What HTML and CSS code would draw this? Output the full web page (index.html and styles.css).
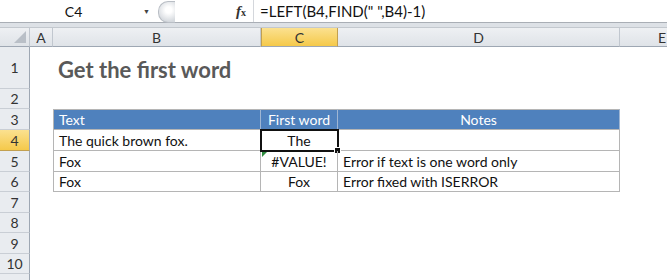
FILE: index.html
```html
<!DOCTYPE html>
<html lang="en">
<head>
  <meta charset="UTF-8" />
  <title>Get the first word</title>
  <link rel="stylesheet" href="styles.css">
</head>
<body>

<div class="formula-bar">
  <div class="name-box">
    <span class="name-text">C4</span>
    <span class="name-arrow">&#9660;</span>
  </div>
  <div class="grip"></div>
  <div class="fx-area"><span class="fx"><i>f</i><small>x</small></span></div>
  <div class="formula">=LEFT(B4,FIND(" ",B4)-1)</div>
</div>
<div class="strip"></div>

<div class="sheet">
  <!-- column headers -->
  <div class="corner"><span class="corner-tri"></span></div>
  <div class="colhead">A</div>
  <div class="colhead">B</div>
  <div class="colhead active">C</div>
  <div class="colhead">D</div>
  <div class="colhead last">E</div>

  <!-- row 1 -->
  <div class="rowhead tall">1</div>
  <div class="cell"></div>
  <div class="cell title span3">Get the first word</div>
  <div class="cell"></div>

  <!-- row 2 -->
  <div class="rowhead">2</div>
  <div class="cell span5"></div>

  <!-- row 3 -->
  <div class="rowhead">3</div>
  <div class="cell"></div>
  <div class="cell th first">Text</div>
  <div class="cell th center">First word</div>
  <div class="cell th center">Notes</div>
  <div class="cell"></div>

  <!-- row 4 -->
  <div class="rowhead active">4</div>
  <div class="cell"></div>
  <div class="cell td first">The quick brown fox.</div>
  <div class="cell td center selected">The</div>
  <div class="cell td"></div>
  <div class="cell"></div>

  <!-- row 5 -->
  <div class="rowhead">5</div>
  <div class="cell"></div>
  <div class="cell td first">Fox</div>
  <div class="cell td center flagged">#VALUE!</div>
  <div class="cell td">Error if text is one word only</div>
  <div class="cell"></div>

  <!-- row 6 -->
  <div class="rowhead">6</div>
  <div class="cell"></div>
  <div class="cell td first">Fox</div>
  <div class="cell td center">Fox</div>
  <div class="cell td">Error fixed with ISERROR</div>
  <div class="cell"></div>

  <div class="rowhead">7</div>
  <div class="cell span5"></div>
  <div class="rowhead">8</div>
  <div class="cell span5"></div>
  <div class="rowhead">9</div>
  <div class="cell span5"></div>
  <div class="rowhead">10</div>
  <div class="cell span5"></div>
  <div class="rowhead"></div>
  <div class="cell span5"></div>
</div>

</body>
</html>
```

FILE: styles.css
```css
body {
  margin: 0;
  font-family: 'Lato', 'Liberation Sans', sans-serif;
  background: white;
  overflow: hidden;
}

.formula-bar {
  display: flex;
  height: 22px;
  border-bottom: 1px solid #a9aeb5;
  background: white;
}

.name-box {
  width: 158px;
  display: flex;
  align-items: center;
  font-size: 14px;
  color: #111;
}

.name-text {
  flex: 1;
  text-align: center;
  padding-left: 4px;
}

.name-arrow {
  font-size: 7px;
  color: #444;
  margin-right: 8px;
}

.grip {
  width: 16px;
  height: 20px;
  margin-top: 1px;
  border-radius: 10px 0 0 10px;
  background: radial-gradient(circle at 60% 40%, #ffffff 20%, #d5d9de 75%);
  border: 1px solid #b9bec5;
  border-right: none;
}

.fx-area {
  width: 71px;
  display: flex;
  align-items: center;
  justify-content: flex-end;
  padding-right: 7px;
  border-right: 1px solid #d4d7dc;
}

.fx {
  font-family: 'Liberation Serif', serif;
  font-weight: bold;
  font-size: 15px;
  color: #333;
}

.fx small {
  font-size: 10px;
}

.formula {
  padding-left: 6px;
  display: flex;
  align-items: center;
  font-size: 15px;
  color: #111;
}

.strip {
  height: 4px;
  background: #dde1e6;
  border-bottom: 1px solid #c3c8ce;
}

.sheet {
  display: grid;
  grid-template-columns: 30px 23px 208px 77px 282px 1fr;
  grid-template-rows: 19px 42px 20px 21px 21px 21px 20px 21px 20px 21px 20px 21px;
}

.corner, .colhead {
  background: linear-gradient(#eef0f3, #dfe3e8);
  border-right: 1px solid #c1c7cf;
  border-bottom: 1px solid #9ea7b3;
  font-size: 14px;
  color: #333;
  display: flex;
  align-items: center;
  justify-content: center;
}

.corner {
  position: relative;
}

.corner-tri {
  position: absolute;
  right: 3px;
  bottom: 3px;
  width: 0;
  height: 0;
  border-left: 12px solid transparent;
  border-bottom: 12px solid #b9bfc7;
}

.colhead.active {
  background: linear-gradient(#fbe190, #f5c94a);
  border-right-color: #c2a050;
  border-left: 1px solid #c2a050;
}

.colhead.last {
  justify-content: flex-start;
  padding-left: 38px;
  border-right: none;
}

.rowhead {
  background: #e9ecf0;
  border-right: 1px solid #9ea7b3;
  border-bottom: 1px solid #c9ced5;
  font-size: 14px;
  color: #333;
  display: flex;
  align-items: center;
  justify-content: center;
}

.rowhead.active {
  background: linear-gradient(#fbe190, #f5c94a);
  border-bottom-color: #c2a050;
}

.cell {
  font-size: 14px;
  color: #111;
  display: flex;
  align-items: flex-end;
  padding: 0 5px 1px;
  white-space: nowrap;
  box-sizing: border-box;
}

.span3 { grid-column: span 3; }
.span5 { grid-column: span 5; }

.title {
  font-size: 22px;
  font-weight: bold;
  color: #595959;
  padding-bottom: 6px;
}

.th, .td {
  border-right: 1px solid #b5b5b5;
  border-bottom: 1px solid #b5b5b5;
}

.th {
  background: #4f81bd;
  color: white;
  border-top: 1px solid #b5b5b5;
  border-right-color: #9fb6d3;
}

.first {
  border-left: 1px solid #b5b5b5;
}

.center {
  justify-content: center;
}

.selected {
  position: relative;
  outline: 2px solid #111;
  outline-offset: -1px;
}

.selected::after {
  content: "";
  position: absolute;
  right: -4px;
  bottom: -4px;
  width: 5px;
  height: 5px;
  background: #111;
  border: 1px solid white;
}

.flagged {
  position: relative;
}

.flagged::before {
  content: "";
  position: absolute;
  left: 1px;
  top: 1px;
  border-top: 5px solid #2e8b3e;
  border-right: 5px solid transparent;
}
```
